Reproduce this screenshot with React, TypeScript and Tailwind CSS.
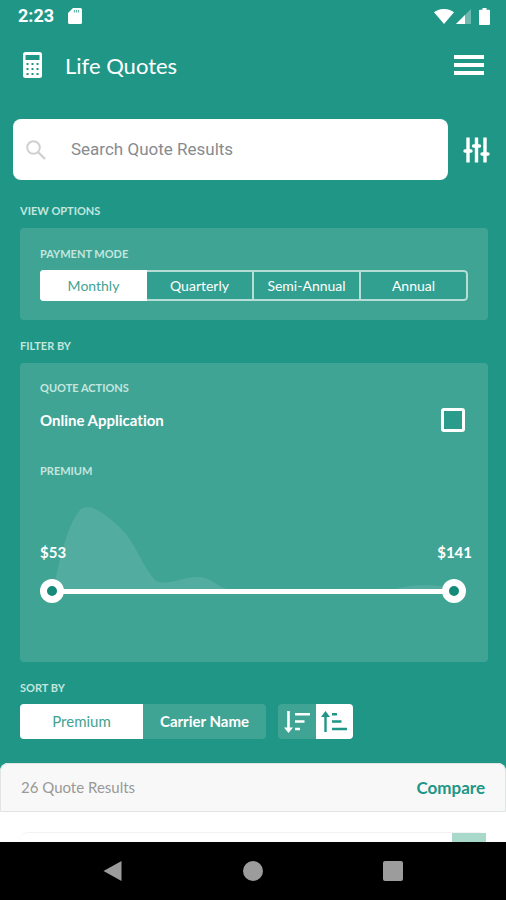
import React, { useState } from 'react';

const PAYMENT_MODES = ['Monthly', 'Quarterly', 'Semi-Annual', 'Annual'];
const MIN_PREMIUM = 53;
const MAX_PREMIUM = 141;

const thumbClasses =
  'pointer-events-none col-start-1 row-start-1 h-6 w-full appearance-none bg-transparent outline-none [&::-webkit-slider-thumb]:pointer-events-auto [&::-webkit-slider-thumb]:size-6 [&::-webkit-slider-thumb]:cursor-pointer [&::-webkit-slider-thumb]:appearance-none [&::-webkit-slider-thumb]:rounded-full [&::-webkit-slider-thumb]:border-[7px] [&::-webkit-slider-thumb]:border-white [&::-webkit-slider-thumb]:bg-[#168a79]';

const SectionLabel: React.FC<{ children: React.ReactNode }> = ({ children }) => (
  <h2 className="text-[11px] leading-4 font-bold uppercase text-[#c3e6df]">{children}</h2>
);

const StatusBar = () => (
  <div className="flex h-8 shrink-0 items-center justify-between pl-[18px] pr-4 text-white">
    <div className="flex items-center gap-[14px]">
      <span className="font-[Roboto,sans-serif] text-[18px] leading-6 font-bold">2:23</span>
      <svg className="h-4 w-[14px]" viewBox="0 0 14 16" aria-hidden="true">
        <path fill="currentColor" d="M5 0h7.500a1.500 1.500 0 0 1 1.500 1.500v13a1.500 1.500 0 0 1-1.500 1.500h-11A1.500 1.500 0 0 1 0 14.500V5z" />
        <path stroke="#209686" strokeWidth="1.200" d="M6.500 2v2.500M8.500 2v2.500M10.500 2v2.500" opacity=".7" />
      </svg>
    </div>
    <div className="flex items-center">
      <svg className="h-[15px] w-5" viewBox="0 0 20 15" aria-hidden="true">
        <path fill="currentColor" d="M10 15 0 3.200C5.500-1.100 14.500-1.100 20 3.200z" />
      </svg>
      <svg className="ml-[2px] h-[15px] w-[15px]" viewBox="0 0 15 15" aria-hidden="true">
        <path fill="currentColor" opacity=".35" d="M15 0v15H0z" />
        <path fill="currentColor" d="M9 6v9H0z" />
      </svg>
      <svg className="ml-2 h-[17px] w-[11px]" viewBox="0 0 11 17" aria-hidden="true">
        <path fill="currentColor" d="M3.500 0h4v1.700H10a1 1 0 0 1 1 1V16a1 1 0 0 1-1 1H1a1 1 0 0 1-1-1V2.700a1 1 0 0 1 1-1h2.500z" />
      </svg>
    </div>
  </div>
);

const CalculatorIcon = () => (
  <svg className="h-[26px] w-[19px]" viewBox="0 0 19 26" aria-hidden="true">
    <rect width="19" height="26" rx="2.500" fill="#fff" />
    <g fill="#209686">
      <rect x="2.500" y="3" width="14" height="5" rx=".5" />
      <path d="M3.500 11h2v2h-2zM8.500 11h2v2h-2zM13.500 11h2v2h-2zM3.500 16h2v2h-2zM8.500 16h2v2h-2zM13.500 16h2v2h-2zM3.500 21h2v2h-2zM8.500 21h2v2h-2zM13.500 21h2v2h-2z" />
    </g>
  </svg>
);

const SortDescIcon = () => (
  <svg className="h-[22px] w-[26px]" viewBox="0 0 26 22" fill="none" stroke="currentColor" strokeWidth="2.600" aria-hidden="true">
    <path d="M4.500 0v18M11 3.200h15M11 10.500h9.500M11 18h5" />
    <path fill="currentColor" stroke="none" d="M0 16.500h9L4.500 22z" />
  </svg>
);

const SortAscIcon = () => (
  <svg className="h-[22px] w-[26px]" viewBox="0 0 26 22" fill="none" stroke="currentColor" strokeWidth="2.400" aria-hidden="true">
    <path d="M4.500 21V3M11 3.200h5M11 10.500h9.500M11 18h15" />
    <path fill="currentColor" stroke="none" d="M0 6h9L4.500 0z" />
  </svg>
);

export default function App() {
  const [mode, setMode] = useState('Monthly');
  const [online, setOnline] = useState(false);
  const [low, setLow] = useState(MIN_PREMIUM);
  const [high, setHigh] = useState(MAX_PREMIUM);
  const [sortBy, setSortBy] = useState('Premium');
  const [ascending, setAscending] = useState(true);

  return (
    <div className="flex min-h-screen flex-col bg-[#209686] font-[Lato,sans-serif] [font-variant-ligatures:none]">
      <StatusBar />

      <header className="flex h-[66px] shrink-0 items-center pl-[23px] pr-[22px] text-white">
        <CalculatorIcon />
        <h1 className="ml-[23px] text-[22px]">Life Quotes</h1>
        <button type="button" aria-label="Menu" className="ml-auto flex w-[30px] flex-col gap-1 py-2">
          <span className="h-1 bg-white" />
          <span className="h-1 bg-white" />
          <span className="h-1 bg-white" />
        </button>
      </header>

      <form className="mt-[21px] flex items-center pl-[13px] pr-4" onSubmit={(e) => e.preventDefault()}>
        <label className="flex h-[61px] min-w-0 flex-1 items-center rounded-lg bg-white pl-[13px]">
          <svg className="size-5 shrink-0 text-[#d0d0d0]" viewBox="0 0 20 20" fill="none" stroke="currentColor" aria-hidden="true">
            <circle cx="7.500" cy="7.500" r="6.300" strokeWidth="2" />
            <path strokeWidth="2.400" d="m12 12 7 7" />
          </svg>
          <input
            type="search"
            aria-label="Search Quote Results"
            placeholder="Search Quote Results"
            className="ml-[25px] min-w-0 flex-1 bg-transparent font-[Roboto,sans-serif] text-[17px] text-gray-700 outline-none placeholder:text-[#878b8f]"
          />
        </label>
        <button type="button" aria-label="Toggle filters" className="ml-[15px] text-white">
          <svg className="h-[26px] w-[27px]" viewBox="0 0 27 26" fill="none" stroke="currentColor" aria-hidden="true">
            <path strokeWidth="3.400" d="M5 .5v25M13.500.5v25M22 .5v25" />
            <path strokeWidth="3.400" strokeLinecap="round" d="M2 14h6M10.500 9h6M19 17h6" />
          </svg>
        </button>
      </form>

      <main className="flex flex-col pl-5 pr-[18px] pt-[23px] pb-6">
        <SectionLabel>View Options</SectionLabel>
        <section className="mt-[9px] rounded bg-[#40a495] px-5 pt-[18px] pb-[19px]">
          <SectionLabel>Payment Mode</SectionLabel>
          <div className="mt-2 grid h-[31px] grid-cols-4 overflow-hidden rounded bg-[#32a091]">
            {PAYMENT_MODES.map((item) => (
              <button
                key={item}
                type="button"
                aria-pressed={mode === item}
                onClick={() => setMode(item)}
                className={
                  mode === item
                    ? 'border-y-2 border-r-2 border-white bg-white text-sm text-[#43a393] first:border-l-2'
                    : 'border-y-2 border-r-2 border-[#b5ded6] text-sm text-white first:rounded-l first:border-l-2 last:rounded-r'
                }
              >
                {item}
              </button>
            ))}
          </div>
        </section>

        <div className="mt-[18px]">
          <SectionLabel>Filter By</SectionLabel>
        </div>
        <section className="mt-[9px] rounded bg-[#40a495] px-5 pt-[17px] pb-[59px] text-white">
          <SectionLabel>Quote Actions</SectionLabel>
          <label className="mt-3 flex h-6 items-center justify-between pr-[3px] text-[15px] font-bold">
            Online Application
            <input
              type="checkbox"
              checked={online}
              onChange={(e) => setOnline(e.target.checked)}
              className="size-6 appearance-none rounded-[3px] border-[3px] border-white bg-[#2b9c8c] checked:bg-white"
            />
          </label>
          <div className="mt-[31px]">
            <SectionLabel>Premium</SectionLabel>
          </div>

          {/* Distribution curve sits behind the price labels and the slider */}
          <div className="relative mt-[21px] pt-[42px]">
            <svg className="absolute inset-x-0 top-0 h-[91px] w-full" viewBox="0 0 428 91" preserveAspectRatio="none" aria-hidden="true">
              <path
                fill="#52aca0"
                d="M12 91L16 77C21 55 28 24 40 10 43 7 48 6 53 8 65 13 78 25 86 34 98 50 105 70 115 80 125 87 142 77 158 77 171 77 176 86 188 89.500L188 91zM350 91C365 85 385 84 413 87V91z"
              />
            </svg>
            <div className="relative flex h-5 items-center justify-between text-[15px] font-bold">
              <span>${low}</span>
              <span className="-mr-1">${high}</span>
            </div>
            <div className="relative mt-[17px] mr-[2px] grid items-center">
              <div className="col-start-1 row-start-1 mx-3 h-[5px] bg-white" />
              <input
                type="range"
                aria-label="Minimum premium"
                min={MIN_PREMIUM}
                max={MAX_PREMIUM}
                value={low}
                onChange={(e) => setLow(Math.min(Number(e.target.value), high))}
                className={thumbClasses}
              />
              <input
                type="range"
                aria-label="Maximum premium"
                min={MIN_PREMIUM}
                max={MAX_PREMIUM}
                value={high}
                onChange={(e) => setHigh(Math.max(Number(e.target.value), low))}
                className={thumbClasses}
              />
            </div>
          </div>
        </section>

        <div className="mt-[18px]">
          <SectionLabel>Sort By</SectionLabel>
        </div>
        <div className="mt-2 flex h-[35px] gap-3">
          <div className="grid w-[246px] grid-cols-2 overflow-hidden rounded bg-[#40a495]">
            {['Premium', 'Carrier Name'].map((item) => (
              <button
                key={item}
                type="button"
                aria-pressed={sortBy === item}
                onClick={() => setSortBy(item)}
                className={sortBy === item ? 'bg-white text-[15px] text-[#43a393]' : 'text-[15px] font-bold text-white'}
              >
                {item}
              </button>
            ))}
          </div>
          <div className="grid w-[75px] grid-cols-2 overflow-hidden rounded bg-[#40a495]">
            <button
              type="button"
              aria-label="Sort descending"
              onClick={() => setAscending(false)}
              className={ascending ? 'flex items-center justify-center text-white' : 'flex items-center justify-center bg-white text-[#209686]'}
            >
              <SortDescIcon />
            </button>
            <button
              type="button"
              aria-label="Sort ascending"
              onClick={() => setAscending(true)}
              className={ascending ? 'flex items-center justify-center bg-white text-[#209686]' : 'flex items-center justify-center text-white'}
            >
              <SortAscIcon />
            </button>
          </div>
        </div>
      </main>

      <section className="flex flex-1 flex-col overflow-hidden rounded-t-lg bg-white">
        <div className="flex h-[49px] shrink-0 items-center justify-between rounded-t-lg border border-[#e0e5e4] bg-[#f8f8f8] px-5">
          <p className="text-[15px] text-[#999]">26 Quote Results</p>
          <button type="button" className="text-[17px] font-bold text-[#209686]">Compare</button>
        </div>
        {/* Top edge of the first quote card */}
        <div className="mx-5 mt-5 flex h-[10px] justify-end rounded-t-lg border-t border-[#f2f2f2]">
          <div className="h-full w-[34px] bg-[#a9d9cb]" />
        </div>
      </section>

      <nav className="flex h-[58px] shrink-0 items-center justify-center gap-[120px] bg-black text-[#9c9c9c]">
        <button type="button" aria-label="Back">
          <svg className="size-5" viewBox="0 0 20 20" aria-hidden="true">
            <path fill="currentColor" d="M18.500 0v20L.5 10z" />
          </svg>
        </button>
        <button type="button" aria-label="Home" className="size-5 rounded-full bg-[#9c9c9c]" />
        <button type="button" aria-label="Recent apps" className="size-5 rounded-[2px] bg-[#9c9c9c]" />
      </nav>
    </div>
  );
}
